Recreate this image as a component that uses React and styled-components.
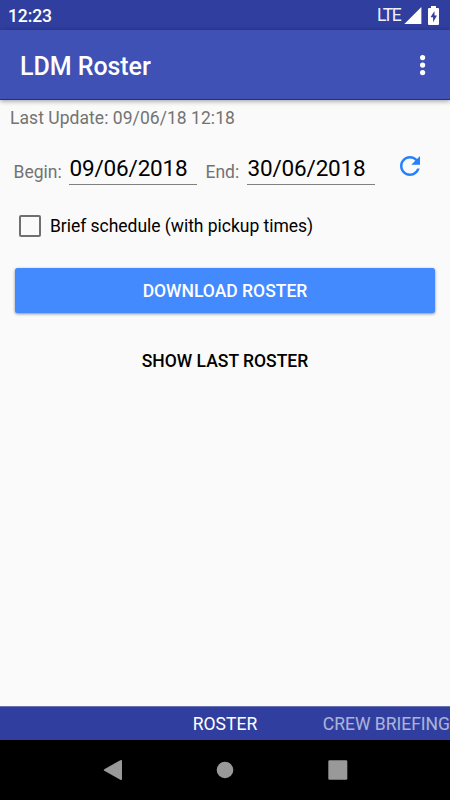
import React from "react";
import styled, { createGlobalStyle } from "styled-components";

const GlobalStyle = createGlobalStyle`
  * { box-sizing: border-box; }
  body { margin: 0; background: #fafafa; }
  button { font: inherit; border: 0; padding: 0; background: none; color: inherit; }
`;

const Screen = styled.div`
  width: 450px;
  height: 800px;
  display: flex;
  flex-direction: column;
  overflow: hidden;
  background: #fafafa;
  font-family: Roboto, "Noto Sans", sans-serif;
  font-size: 17.5px;
  color: #000;
`;

const StatusBar = styled.div`
  height: 30px;
  flex: none;
  display: flex;
  align-items: center;
  justify-content: space-between;
  padding: 2px 9px 0 8px;
  background: #303f9f;
  color: #fff;
`;

const Clock = styled.span`
  font-weight: 500;
  line-height: 28px;
  letter-spacing: -0.1px;
`;

const StatusIcons = styled.div`
  display: flex;
  align-items: center;
  height: 28px;
`;

const Network = styled.span`
  width: 27px;
  padding-bottom: 2px;
  line-height: 26px;
  letter-spacing: -1.4px;
  color: #f0f1fa;
`;

const AppBar = styled.header`
  height: 70px;
  flex: none;
  display: flex;
  align-items: center;
  justify-content: space-between;
  padding: 2px 20px 0 20px;
  background: #3f51b5;
  border-bottom: 1px solid #1b2c9f;
  box-shadow: 0 1px 5px rgba(0, 0, 0, 0.4);
  color: #fff;
`;

const Title = styled.h1`
  margin: 0;
  padding-top: 2px;
  font-size: 25px;
  font-weight: 500;
  line-height: 30px;
  letter-spacing: -0.05px;
`;

const MenuButton = styled.button`
  width: 15px;
  height: 30px;
  margin-bottom: 2px;
  display: flex;
  align-items: center;
  justify-content: center;
`;

const Content = styled.main`
  flex: 1;
  display: flex;
  flex-direction: column;
`;

const Muted = styled.span`
  color: #737373;
  line-height: 21px;
  white-space: nowrap;
`;

const LastUpdate = styled(Muted)`
  padding: 8px 0 0 10px;
  height: 44px;
  letter-spacing: 0.05px;
`;

const DateRow = styled.div`
  display: flex;
  align-items: flex-start;
  height: 56px;
  padding-left: 13px;
`;

const DateLabel = styled(Muted)`
  width: ${(p) => p.$width}px;
  padding: 18px 0 0 0.5px;
`;

const DateField = styled.div`
  width: 128px;
  height: 41px;
  margin-right: 8px;
  padding: 10px 0 0 0.5px;
  border-bottom: 1px solid #808080;
  font-size: 22.5px;
  line-height: 28px;
  letter-spacing: -0.17px;
  white-space: nowrap;
`;

const RefreshButton = styled.button`
  margin: 7px 0 0 12px;
  width: 30px;
  height: 30px;
  color: #2580ff;
`;

const CheckRow = styled.label`
  display: flex;
  align-items: center;
  height: 51px;
  padding-left: 19px;
  gap: 9px;
`;

const Box = styled.span`
  width: 22px;
  height: 22px;
  border: 2px solid #6f6f6f;
  border-radius: 2px;
`;

const CheckLabel = styled.span`
  line-height: 22px;
  letter-spacing: -0.03px;
`;

const Action = styled.button`
  height: 45px;
  margin: ${(p) => (p.$primary ? "17px 15px 0" : "25px 15px 0")};
  padding-top: 1px;
  border-radius: 2.5px;
  background: ${(p) => (p.$primary ? "#448aff" : "transparent")};
  color: ${(p) => (p.$primary ? "#fff" : "#000")};
  box-shadow: ${(p) => (p.$primary ? "0 1px 3px rgba(0, 0, 0, 0.45)" : "none")};
  font-weight: 500;
  line-height: 44px;
`;

const TabStrip = styled.nav`
  height: 34px;
  flex: none;
  display: grid;
  grid-template-columns: 150px 150px 150px;
  background: #303f9f;
  border-top: 1px solid #6a73b2;
  color: #fff;
`;

const Tab = styled.span`
  grid-column: ${(p) => p.$column};
  text-align: ${(p) => (p.$current ? "center" : "right")};
  opacity: ${(p) => (p.$current ? 1 : 0.6)};
  padding-top: 1px;
  line-height: 33px;
  white-space: nowrap;
`;

const NavBar = styled.div`
  height: 60px;
  flex: none;
  display: flex;
  justify-content: center;
  align-items: center;
  gap: 82.5px;
  background: #000;
`;

const Icon = styled.svg`
  display: block;
  flex: none;
  fill: ${(p) => p.$fill || "currentColor"};
`;

const BatterySlot = styled.span`
  margin-left: 4px;
`;

const SignalIcon = () => (
  <Icon width="19" height="20" viewBox="0 0 19 20">
    <path d="M17.4 1V18H0.4Z" />
  </Icon>
);

const BatteryIcon = () => (
  <Icon width="14" height="20" viewBox="0 0 14 20">
    <path
      fillRule="evenodd"
      d="M4 0H9V2H11Q12 2 12 3V18Q12 19 11 19H2Q1 19 1 18V3Q1 2 2 2H4ZM7.5 5L3.5 11.3H6.1V16.2L10 9.6H7.5Z"
    />
  </Icon>
);

const MoreIcon = () => (
  <Icon width="8" height="24" viewBox="0 0 8 24">
    <circle cx="3.6" cy="4.6" r="2.6" />
    <circle cx="3.6" cy="12.1" r="2.6" />
    <circle cx="3.6" cy="19.6" r="2.6" />
  </Icon>
);

const RefreshIcon = () => (
  <Icon width="30" height="30" viewBox="0 0 24 24">
    <path d="M17.65 6.35C16.2 4.9 14.21 4 12 4c-4.42 0-7.99 3.58-7.99 8s3.57 8 7.99 8c3.73 0 6.84-2.55 7.73-6h-2.08c-.82 2.33-3.04 4-5.65 4-3.31 0-6-2.69-6-6s2.69-6 6-6c1.66 0 3.14.69 4.22 1.78L13 11h7V4l-2.35 2.35z" />
  </Icon>
);

const BackIcon = () => (
  <Icon width="30" height="30" viewBox="0 0 30 30" $fill="#999">
    <path d="M6.3 14.2L22.3 5.2Q24 4.4 24 6V24Q24 25.6 22.3 24.8L6.3 15.8Q5.2 15 6.3 14.2Z" />
  </Icon>
);

const HomeIcon = () => (
  <Icon width="30" height="30" viewBox="0 0 30 30" $fill="#999">
    <circle cx="15" cy="15" r="8.3" />
  </Icon>
);

const RecentsIcon = () => (
  <Icon width="30" height="30" viewBox="0 0 30 30" $fill="#999">
    <rect x="5.3" y="5.3" width="19" height="19.4" rx="1.2" />
  </Icon>
);

export default function App() {
  return (
    <Screen>
      <GlobalStyle />
      <StatusBar>
        <Clock>12:23</Clock>
        <StatusIcons>
          <Network>LTE</Network>
          <SignalIcon />
          <BatterySlot>
            <BatteryIcon />
          </BatterySlot>
        </StatusIcons>
      </StatusBar>
      <AppBar>
        <Title>LDM Roster</Title>
        <MenuButton aria-label="More options">
          <MoreIcon />
        </MenuButton>
      </AppBar>
      <Content>
        <LastUpdate>Last Update: 09/06/18 12:18</LastUpdate>
        <DateRow>
          <DateLabel $width={56}>Begin:</DateLabel>
          <DateField>09/06/2018</DateField>
          <DateLabel $width={42}>End:</DateLabel>
          <DateField>30/06/2018</DateField>
          <RefreshButton aria-label="Refresh">
            <RefreshIcon />
          </RefreshButton>
        </DateRow>
        <CheckRow>
          <Box />
          <CheckLabel>Brief schedule (with pickup times)</CheckLabel>
        </CheckRow>
        <Action $primary>DOWNLOAD ROSTER</Action>
        <Action>SHOW LAST ROSTER</Action>
      </Content>
      <TabStrip>
        <Tab $current $column={2}>ROSTER</Tab>
        <Tab $column={3}>CREW BRIEFING</Tab>
      </TabStrip>
      <NavBar>
        <BackIcon />
        <HomeIcon />
        <RecentsIcon />
      </NavBar>
    </Screen>
  );
}
